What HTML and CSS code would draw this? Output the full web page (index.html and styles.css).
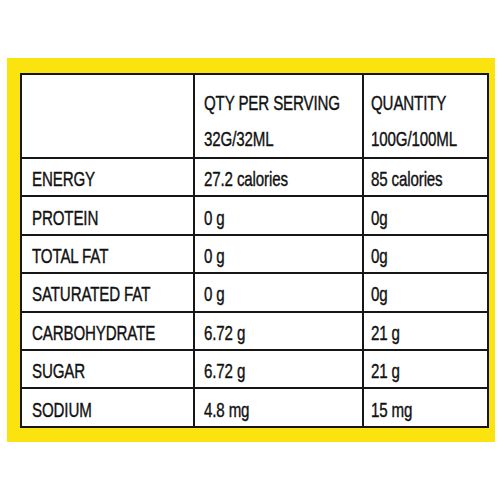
FILE: index.html
```html
<html>
<head>
<link rel="stylesheet" href="styles.css">
<title>Nutrition Facts</title>
</head>
<body>
    <div class="label">
        <table class="facts">
            <colgroup>
                <col class="c-name">
                <col class="c-serving">
                <col class="c-hundred">
            </colgroup>
            <tr class="head">
                <td></td>
                <td><span class="txt">QTY PER SERVING</span><br><span class="txt">32G/32ML</span></td>
                <td class="last"><span class="txt">QUANTITY</span><br><span class="txt">100G/100ML</span></td>
            </tr>
            <tr>
                <td><span class="txt">ENERGY</span></td>
                <td><span class="txt">27.2 calories</span></td>
                <td class="last"><span class="txt">85 calories</span></td>
            </tr>
            <tr>
                <td><span class="txt">PROTEIN</span></td>
                <td><span class="txt">0 g</span></td>
                <td class="last"><span class="txt">0g</span></td>
            </tr>
            <tr>
                <td><span class="txt">TOTAL FAT</span></td>
                <td><span class="txt">0 g</span></td>
                <td class="last"><span class="txt">0g</span></td>
            </tr>
            <tr>
                <td><span class="txt">SATURATED FAT</span></td>
                <td><span class="txt">0 g</span></td>
                <td class="last"><span class="txt">0g</span></td>
            </tr>
            <tr>
                <td><span class="txt">CARBOHYDRATE</span></td>
                <td><span class="txt">6.72 g</span></td>
                <td class="last"><span class="txt">21 g</span></td>
            </tr>
            <tr>
                <td><span class="txt">SUGAR</span></td>
                <td><span class="txt">6.72 g</span></td>
                <td class="last"><span class="txt">21 g</span></td>
            </tr>
            <tr>
                <td><span class="txt">SODIUM</span></td>
                <td><span class="txt">4.8 mg</span></td>
                <td class="last"><span class="txt">15 mg</span></td>
            </tr>
        </table>
    </div>
</body>
</html>
```

FILE: styles.css
```css
body {
    margin: 0;
    background-color: white;
}
.label {
    margin-top: 58px;
    margin-left: 7px;
    width: 467px;
    padding: 15px 8px 14px 13px;
    background-color: #fbe30f;
}
table.facts {
    width: 467px;
    table-layout: fixed;
    border-collapse: collapse;
    background-color: white;
    font-family: "Liberation Sans", Arial, sans-serif;
    font-size: 21px;
    color: #111;
}
col.c-name {
    width: 173px;
}
col.c-serving {
    width: 169px;
}
col.c-hundred {
    width: 125px;
}
.facts td {
    border: 2px solid #161616;
    height: 38.4px;
    padding: 4px 0 0 9px;
    white-space: nowrap;
    overflow: hidden;
    vertical-align: middle;
}
.facts td:first-child {
    padding-left: 10px;
}
.facts td.last {
    padding-left: 7px;
}
.facts tr.head td {
    height: 83px;
    padding-top: 10px;
    vertical-align: top;
    line-height: 36px;
}
.txt {
    display: inline-block;
    transform: scaleX(0.72);
    transform-origin: left center;
    letter-spacing: -0.2px;
    -webkit-text-stroke: 0.4px #111;
}
```
